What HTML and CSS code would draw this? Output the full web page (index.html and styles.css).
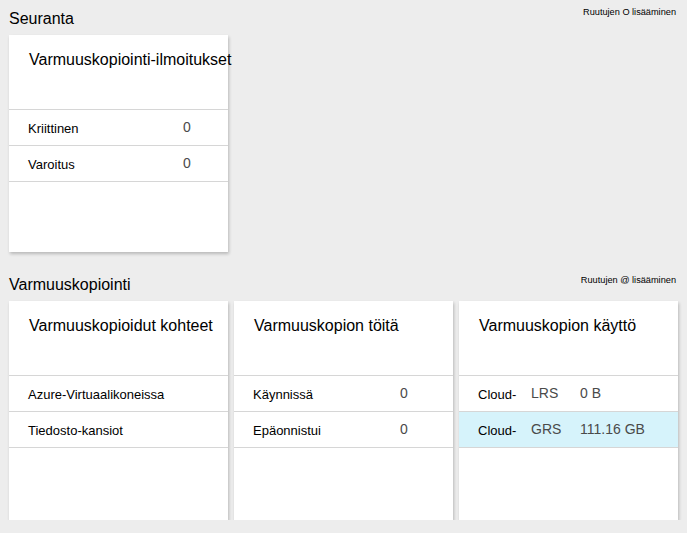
FILE: index.html
```html
<!DOCTYPE html>
<html lang="fi">
<head>
<meta charset="utf-8">
<title>Seuranta</title>
<link rel="stylesheet" href="styles.css">
</head>
<body>
<section class="section section-monitor">
  <header class="section-head">
    <h2 class="section-title">Seuranta</h2>
    <span class="add-tiles">Ruutujen O lisääminen</span>
  </header>
  <div class="tiles tiles-one">
    <article class="card card-short">
      <h3 class="card-title">Varmuuskopiointi-ilmoitukset</h3>
      <div class="row row-alerts"><span class="label">Kriittinen</span><span class="value">0</span></div>
      <div class="row row-alerts"><span class="label">Varoitus</span><span class="value">0</span></div>
    </article>
  </div>
</section>
<section class="section section-backup">
  <header class="section-head">
    <h2 class="section-title">Varmuuskopiointi</h2>
    <span class="add-tiles">Ruutujen @ lisääminen</span>
  </header>
  <div class="tiles tiles-three">
    <article class="card">
      <h3 class="card-title">Varmuuskopioidut kohteet</h3>
      <div class="row"><span class="label">Azure-Virtuaalikoneissa</span></div>
      <div class="row"><span class="label">Tiedosto-kansiot</span></div>
    </article>
    <article class="card">
      <h3 class="card-title">Varmuuskopion töitä</h3>
      <div class="row row-jobs"><span class="label">Käynnissä</span><span class="value">0</span></div>
      <div class="row row-jobs"><span class="label">Epäonnistui</span><span class="value">0</span></div>
    </article>
    <article class="card">
      <h3 class="card-title">Varmuuskopion käyttö</h3>
      <div class="row row-usage"><span class="label">Cloud-</span><span class="value">LRS</span><span class="value">0 B</span></div>
      <div class="row row-usage row-selected"><span class="label">Cloud-</span><span class="value">GRS</span><span class="value">111.16 GB</span></div>
    </article>
  </div>
</section>
</body>
</html>
```
FILE: styles.css
```css
html, body {
  margin: 0;
  padding: 0;
}
body {
  background: #ededed;
  font-family: "Liberation Sans", Arial, sans-serif;
  color: #000;
  padding: 7px 9px 0 9px;
}
.section-backup {
  margin-top: 21px;
}
.section-head {
  display: flex;
  justify-content: space-between;
  align-items: flex-start;
  height: 28px;
}
.section-title {
  margin: 3px 0 0 0;
  font-size: 16px;
  font-weight: normal;
  line-height: 18px;
}
.add-tiles {
  font-size: 9.2px;
  line-height: 11px;
  margin-top: 0;
  margin-right: 2px;
}
.section-backup .add-tiles {
  margin-top: 2px;
}
.tiles {
  display: grid;
  gap: 6px;
}
.tiles-one {
  grid-template-columns: 219px;
}
.tiles-three {
  grid-template-columns: repeat(3, 219px);
}
.card {
  background: #fff;
  height: 219px;
  box-shadow: 1px 2px 3px rgba(0, 0, 0, 0.22);
}
.card-short {
  height: 217px;
}
.card-title {
  margin: 0;
  height: 75px;
  box-sizing: border-box;
  padding: 16px 0 0 20px;
  font-size: 16px;
  font-weight: normal;
  line-height: 18px;
  white-space: nowrap;
  border-bottom: 1px solid #d6d6d6;
}
.row {
  height: 36px;
  box-sizing: border-box;
  border-bottom: 1px solid #d6d6d6;
  padding-left: 19px;
  display: grid;
  grid-template-columns: 1fr;
  align-items: start;
}
.row-alerts {
  grid-template-columns: 155px 1fr;
}
.row-jobs {
  grid-template-columns: 147px 1fr;
}
.row-usage {
  grid-template-columns: 53px 49px 1fr;
}
.row-selected {
  background: #d6f3fb;
}
.label {
  font-size: 13px;
  line-height: 15px;
  padding-top: 11px;
  white-space: nowrap;
}
.value {
  font-size: 14px;
  line-height: 16px;
  padding-top: 9px;
  color: #4a4a4a;
  white-space: nowrap;
}
```
